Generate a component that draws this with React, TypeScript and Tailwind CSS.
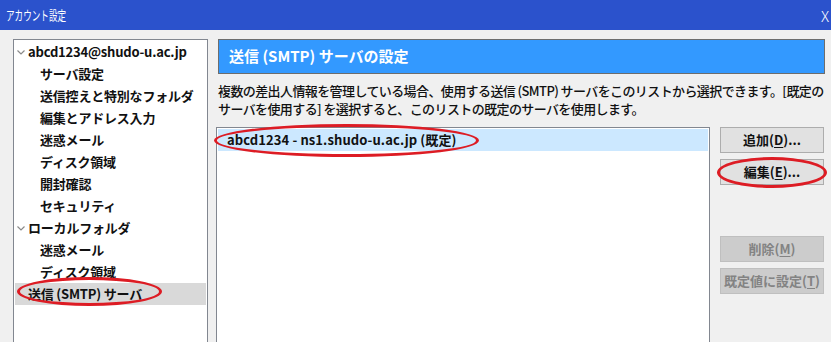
import React from 'react';

const treeItems: { label: string; level: number; chevron?: boolean; selected?: boolean }[] = [
  { label: 'abcd1234@shudo-u.ac.jp', level: 0, chevron: true },
  { label: 'サーバ設定', level: 1 },
  { label: '送信控えと特別なフォルダ', level: 1 },
  { label: '編集とアドレス入力', level: 1 },
  { label: '迷惑メール', level: 1 },
  { label: 'ディスク領域', level: 1 },
  { label: '開封確認', level: 1 },
  { label: 'セキュリティ', level: 1 },
  { label: 'ローカルフォルダ', level: 0, chevron: true },
  { label: '迷惑メール', level: 1 },
  { label: 'ディスク領域', level: 1 },
  { label: '送信 (SMTP) サーバ', level: 0, selected: true },
];

const Chevron: React.FC = () => (
  <svg width="8" height="5" viewBox="0 0 8 5" className="shrink-0">
    <polyline points="0.5,0.5 4,4 7.5,0.5" fill="none" stroke="#8a8a8a" strokeWidth="1.2" />
  </svg>
);

const Button: React.FC<{ label: string; mnemonic: string; suffix?: string; disabled?: boolean; className?: string }> = ({
  label,
  mnemonic,
  suffix = '',
  disabled,
  className = '',
}) => (
  <div
    className={`h-[26px] w-[104px] flex items-center justify-center text-[13px] font-bold border ${
      disabled ? 'bg-[#cccccc] border-[#bfbfbf] text-[#838383]' : 'bg-[#e1e1e1] border-[#adadad] text-[#111]'
    } ${className}`}
  >
    {label}(<span className="underline underline-offset-2">{mnemonic}</span>){suffix}
  </div>
);

export default function App() {
  return (
    <div className="relative w-[831px] h-[342px] overflow-hidden bg-[#f0f0f0] font-['Noto_Sans_CJK_JP',sans-serif] text-[#111]">
      {/* title bar */}
      <div className="h-[30px] bg-[#2b52cc] flex items-center justify-between pl-[6px] pr-[2px] text-white">
        <span className="inline-block text-[13px] origin-left scale-x-[0.66] whitespace-nowrap">アカウント設定</span>
        <span className="text-[15px] font-light leading-none">X</span>
      </div>

      <div className="flex pl-[13px] pt-[9px]">
        {/* tree */}
        <div className="w-[195px] h-[320px] shrink-0 bg-white border border-[#828790] p-[1px]">
          {treeItems.map((it, i) => (
            <div
              key={i}
              className={`h-[22px] flex items-center text-[13px] font-bold whitespace-nowrap tracking-[-0.2px] ${
                it.selected ? 'bg-[#d9d9d9]' : ''
              } ${it.level === 1 ? 'pl-[25px]' : it.chevron ? 'pl-[2px]' : 'pl-[13px]'}`}
            >
              {it.chevron && (
                <span className="w-[11px] flex items-center">
                  <Chevron />
                </span>
              )}
              {it.label}
            </div>
          ))}
        </div>

        {/* right section */}
        <div className="ml-[10px] w-[607px] flex flex-col">
          <div className="h-[35px] bg-[#3399ff] border border-[#6d6d6d] flex items-center pl-[10px]">
            <span className="text-white text-[15px] font-bold">送信 (SMTP) サーバの設定</span>
          </div>
          <p className="mt-[8px] text-[13px] leading-[18px] font-medium whitespace-nowrap tracking-[-0.6px]">
            複数の差出人情報を管理している場合、使用する送信 (SMTP) サーバをこのリストから選択できます。[既定の
            <br />
            サーバを使用する] を選択すると、このリストの既定のサーバを使用します。
          </p>
          <div className="flex mt-[9px] -ml-[2px]">
            <div className="w-[494px] h-[220px] bg-white border border-[#828790] p-[1px]">
              <div className="h-[22px] bg-[#cce8ff] flex items-center pl-[9px] text-[13px] font-bold whitespace-nowrap tracking-[0.1px]">
                abcd1234 - ns1.shudo-u.ac.jp (既定)
              </div>
            </div>
            <div className="ml-[10px] flex flex-col">
              <Button label="追加" mnemonic="D" suffix="..." />
              <Button label="編集" mnemonic="E" suffix="..." className="mt-[6px]" />
              <Button label="削除" mnemonic="M" disabled className="mt-[51px]" />
              <Button label="既定値に設定" mnemonic="T" disabled className="mt-[6px]" />
            </div>
          </div>
        </div>
      </div>

      {/* red annotation ellipses */}
      <div className="absolute left-[17px] top-[277px] w-[145px] h-[29px] rounded-[50%] border-[3px] border-[#dd1c24]" />
      <div className="absolute left-[214px] top-[124px] w-[265px] h-[33px] rounded-[50%] border-[3px] border-[#dd1c24]" />
      <div className="absolute left-[717px] top-[157px] w-[110px] h-[31px] rounded-[50%] border-[3px] border-[#dd1c24]" />
    </div>
  );
}
